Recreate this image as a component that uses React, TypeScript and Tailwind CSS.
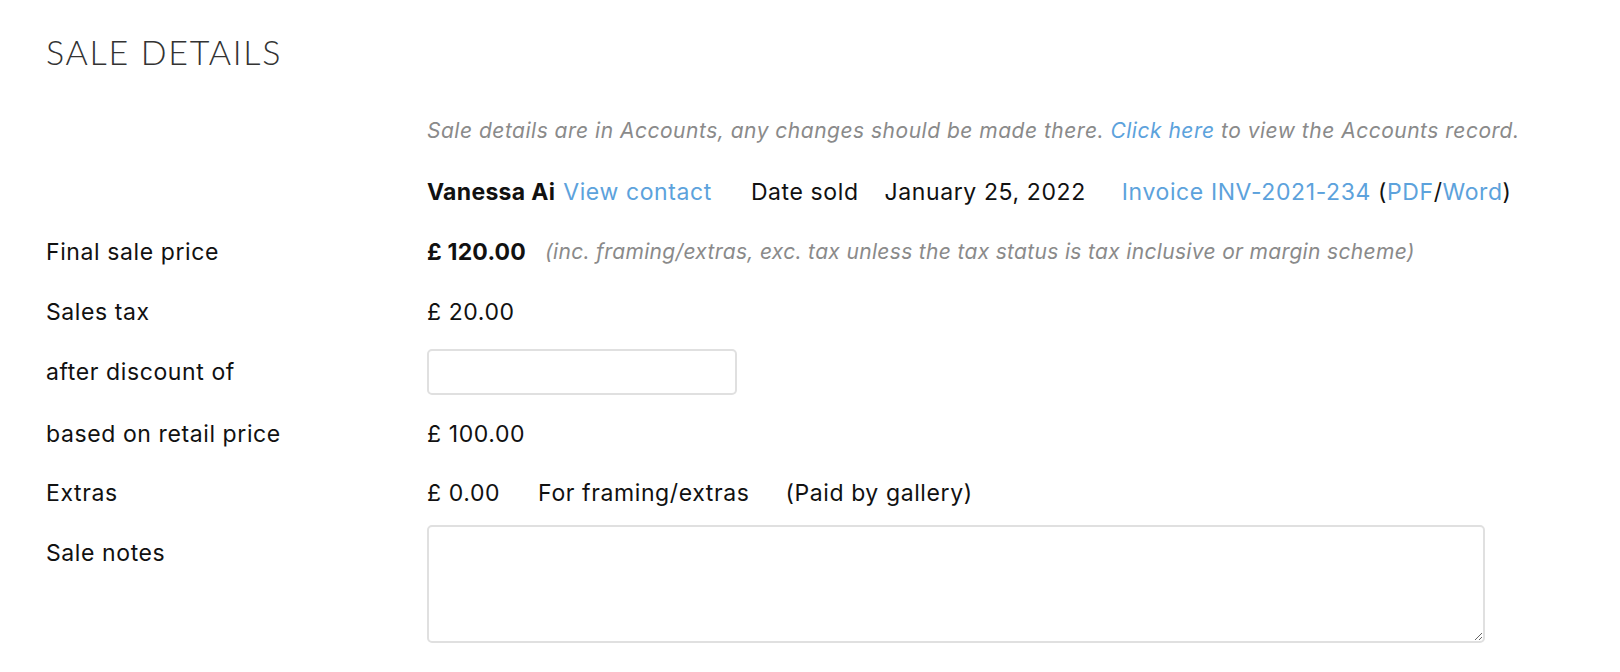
import type { ReactNode } from 'react';

const font = { fontFamily: 'Inter, Lato, sans-serif' };

function Row({ label, children, className = '' }: { label?: string; children: ReactNode; className?: string }) {
  return (
    <div className={`grid grid-cols-[381px_1fr] h-[60px] items-center tracking-[0.6px] ${className}`}>
      <div className="text-[23px] text-[#111]">{label}</div>
      <div className="flex items-center text-[23px] text-[#111]">{children}</div>
    </div>
  );
}

export default function App() {
  return (
    <div className="min-h-screen bg-white pl-[46px] pt-[34px]" style={font}>
      {/* Heading */}
      <h1
        className="text-[34px] leading-[36px] font-light tracking-[1.7px] text-[#333]"
        style={{ fontFamily: 'Lato, sans-serif' }}
      >
        SALE DETAILS
      </h1>

      <div className="mt-[31px]">
        <Row>
          <p className="text-[21px] italic tracking-[0.5px] text-[#8a8a8a]">
            Sale details are in Accounts, any changes should be made there.{' '}
            <a className="text-[#5ca2dc]">Click here</a> to view the Accounts record.
          </p>
        </Row>

        <Row className="mt-[1px]">
          <span className="font-bold tracking-[0.3px]">Vanessa Ai</span>
          <a className="ml-[8px] text-[#5ca2dc]">View contact</a>
          <span className="ml-[39px]">Date sold</span>
          <span className="ml-[26px]">January 25, 2022</span>
          <span className="ml-[36px]">
            <a className="text-[#5ca2dc]">Invoice INV-2021-234</a> (<a className="text-[#5ca2dc]">PDF</a>/
            <a className="text-[#5ca2dc]">Word</a>)
          </span>
        </Row>

        <Row label="Final sale price">
          <span className="font-bold tracking-[0.2px]">£ 120.00</span>
          <span className="ml-[19px] text-[21px] italic tracking-[0.33px] text-[#8a8a8a]">
            (inc. framing/extras, exc. tax unless the tax status is tax inclusive or margin scheme)
          </span>
        </Row>

        <Row label="Sales tax">£ 20.00</Row>

        <Row label="after discount of">
          <input
            type="text"
            className="h-[46px] w-[310px] rounded-[5px] border-2 border-[#e0e0e0] bg-white px-3 outline-none"
          />
        </Row>

        <Row label="based on retail price" className="mt-[2px]">£ 100.00</Row>

        <Row label="Extras" className="-mt-[1px]">
          <span>£ 0.00</span>
          <span className="ml-[38px]">For framing/extras</span>
          <span className="ml-[36px]">(Paid by gallery)</span>
        </Row>

        <div className="grid grid-cols-[381px_1fr] pt-[2px] tracking-[0.6px]">
          <div className="pt-[13px] text-[23px] leading-[30px] text-[#111]">Sale notes</div>
          <div>
            <textarea className="block h-[118px] w-[1058px] rounded-[5px] border-2 border-[#e0e0e0] bg-white p-2 outline-none" />
          </div>
        </div>
      </div>
    </div>
  );
}
